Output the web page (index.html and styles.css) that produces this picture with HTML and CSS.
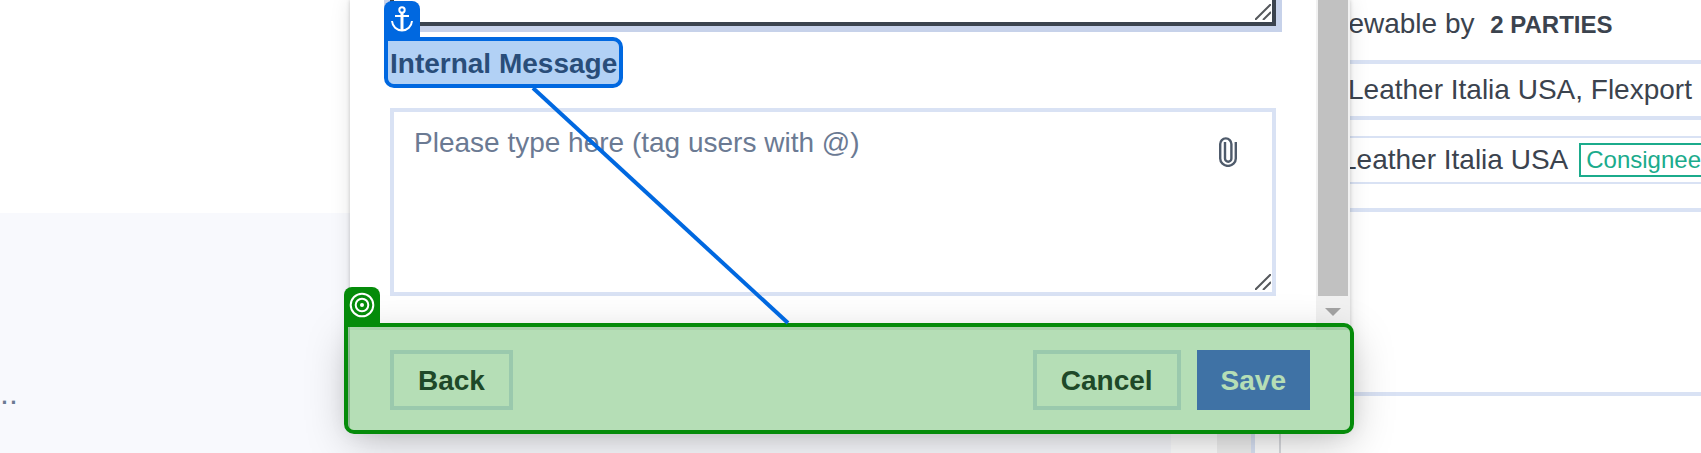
FILE: index.html
```html
<!DOCTYPE html>
<html lang="en">
<head>
<meta charset="utf-8">
<meta name="viewport" content="width=device-width, initial-scale=1">
<title>Internal Message</title>
<link rel="stylesheet" href="styles.css">
</head>
<body>
<main class="page">
  <section class="list-pane">
    <div class="list-top"></div>
    <div class="list-rest"><span class="list-text">..</span></div>
  </section>
  <div class="gutter"></div>
  <div class="page-scroll"></div>
  <div class="page-edge"></div>
  <aside class="details">
    <p class="viewable">Viewable by <strong class="party-count">2 PARTIES</strong></p>
    <div class="party-names">Leather Italia USA, Flexport</div>
    <div class="party-list">
      <div class="party-row">Leather Italia USA <span class="tag">Consignee</span></div>
    </div>
    <div class="details-body"></div>
  </aside>
</main>

<div class="overlay">
  <form class="modal" role="dialog" aria-label="Message">
    <div class="modal-main">
      <div class="fields">
        <div class="field field-focused">
          <textarea class="input input-focused" aria-label="Message"></textarea>
          <svg class="grip" viewBox="0 0 16 16" aria-hidden="true"><path d="M0 16L16 0M8 16L16 8"/></svg>
        </div>
        <div class="label-row">
          <label class="label" for="internal">Internal Message
            <span class="mark mark-blue"></span>
            <span class="badge badge-blue">
              <svg class="badge-icon" viewBox="0 0 26 26" aria-hidden="true"><circle cx="13" cy="4" r="2.700"/><path d="M6 10H20"/><path class="shank" d="M13 6.500V24.500"/><path d="M3 15C3.500 20.500 7.500 24.500 13 24.500S22.500 20.500 23 15"/></svg>
            </span>
          </label>
        </div>
        <div class="field">
          <textarea class="input input-internal" id="internal" placeholder="Please type here (tag users with @)"></textarea>
          <button class="attach" type="button" aria-label="Attach file">
            <svg class="attach-icon" viewBox="0 0 18 30" aria-hidden="true"><path d="M16.800 5V21.500a7.700 7.300 0 0 1-15.600 0V7a5.600 5.600 0 0 1 11.200 0V21.500a3.200 3.200 0 0 1-6.400 0V5"/></svg>
          </button>
          <svg class="grip" viewBox="0 0 16 16" aria-hidden="true"><path d="M0 16L16 0M8 16L16 8"/></svg>
        </div>
      </div>
      <div class="scrollbar" aria-hidden="true">
        <div class="thumb"></div>
        <svg class="arrow" viewBox="0 0 16 8"><path d="M0 0H16L8 8Z"/></svg>
      </div>
    </div>
    <footer class="footer">
      <button class="button" type="button">Back</button>
      <div class="actions">
        <button class="button" type="button">Cancel</button>
        <button class="button button-primary" type="submit">Save</button>
      </div>
      <span class="mark mark-green"></span>
      <span class="badge badge-green">
        <svg class="badge-icon" viewBox="0 0 26 26" aria-hidden="true"><circle cx="13" cy="13" r="11.300"/><circle cx="13" cy="13" r="6.300"/><circle class="dot" cx="13" cy="13" r="2"/></svg>
      </span>
    </footer>
    <svg class="connector" viewBox="0 0 255 235" aria-hidden="true"><path d="M0 0L255 235"/></svg>
  </form>
</div>
</body>
</html>
```

FILE: styles.css
```css
* {
  box-sizing: border-box;
}

body {
  margin: 0;
  overflow: hidden;
  background: #fff;
  color: #3b434e;
  font-family: "Liberation Sans", Arial, sans-serif;
  font-size: 28px;
  line-height: 40px;
}

/* Page behind the dialog */
.page {
  display: flex;
  min-height: 100vh;
}

.list-pane {
  flex: 0 0 1171px;
  display: flex;
  flex-direction: column;
}

.list-top {
  height: 213px;
}

.list-rest {
  flex: 1;
  padding-top: 160px;
  background: #f8f9fd;
}

.list-text {
  color: #6b7a93;
  font-size: 32px;
}

.gutter {
  flex: 0 0 46px;
}

.page-scroll {
  flex: 0 0 34px;
  background: #f0f0f0;
}

.page-edge {
  flex: 0 0 30px;
  border-left: 4px solid #d9e2f4;
  border-right: 2px solid #d8dade;
}

.details {
  flex: 1;
  min-width: 0;
  overflow: hidden;
  white-space: nowrap;
}

.viewable {
  margin: 0;
  padding: 4px 0 15px 43px;
}

.party-count {
  margin-left: 8px;
  font-size: 24px;
}

.party-names {
  padding: 6px 0 6px 67px;
  border-top: 4px solid #d9e2f4;
  border-bottom: 4px solid #d9e2f4;
}

.party-list {
  padding: 16px 0 24px;
  border-bottom: 4px solid #d9e2f4;
}

.party-row {
  display: flex;
  align-items: center;
  gap: 11px;
  height: 48px;
  padding-left: 60px;
  border-top: 2px solid #d9e2f4;
  border-bottom: 2px solid #d9e2f4;
}

.tag {
  flex: none;
  padding: 0 5px;
  border: 2px solid #1bab8c;
  color: #1bab8c;
  font-size: 24px;
  line-height: 30px;
}

.details-body {
  height: 184px;
  border-bottom: 4px solid #d9e2f4;
}

/* Dialog */
.overlay {
  position: absolute;
  inset: 0 1px 0 0;
  display: flex;
  justify-content: center;
  align-items: flex-start;
}

.modal {
  position: relative;
  width: 1000px;
  max-width: 100%;
  background: #fff;
  box-shadow: 0 0 4px rgba(0, 0, 0, 0.2), 0 0 20px rgba(0, 0, 0, 0.1);
}

.modal-main {
  display: flex;
}

.fields {
  flex: 1;
  padding: 0 40px 34px;
}

.field {
  position: relative;
  display: flex;
}

/* The form is scrolled, so the upper field shows only its end */
.field-focused {
  margin-top: -100px;
}

.input {
  width: 100%;
  height: 188px;
  padding: 11px 72px 10px 20px;
  border: 4px solid #d9e2f4;
  border-radius: 0;
  outline: none;
  resize: none;
  background: #fff;
  color: #3b434e;
  font: inherit;
}

.input::placeholder {
  color: #6b7a93;
  opacity: 1;
}

.input-focused {
  height: 126px;
  border-color: #3b434e;
  box-shadow: 0 0 0 6px #c7d2ea;
}

.grip {
  position: absolute;
  right: 5px;
  bottom: 6px;
  width: 16px;
  height: 16px;
  fill: none;
  stroke: #55585c;
  stroke-width: 2;
}

.attach {
  position: absolute;
  top: 29px;
  right: 39px;
  padding: 0;
  border: 0;
  background: none;
}

.attach-icon {
  display: block;
  width: 18px;
  height: 30px;
  fill: none;
  stroke: #4f5b6b;
  stroke-width: 2.4;
}

.label-row {
  display: flex;
  padding: 18px 0 24px;
}

.label {
  position: relative;
  font-weight: 700;
}

.scrollbar {
  flex: 0 0 34px;
  display: flex;
  flex-direction: column;
  align-items: center;
  background: #f1f1f1;
}

.thumb {
  flex: 1;
  width: 30px;
  background: #c1c1c1;
}

.arrow {
  width: 16px;
  height: 8px;
  margin: 12px 0 14px;
  fill: #a3a3a3;
}

.footer {
  position: relative;
  display: flex;
  justify-content: space-between;
  padding: 20px 40px;
  background: #fff;
  box-shadow: 0 10px 44px rgba(0, 0, 0, 0.25);
}

.actions {
  display: flex;
  gap: 16px;
}

.button {
  height: 60px;
  padding: 1px 24px 0;
  border: 4px solid #dae2f2;
  background: #fff;
  color: #2c2c38;
  font: inherit;
  font-weight: 700;
}

.button-primary {
  border: 0;
  background: #5a67e8;
  color: #fff;
}

/* Annotations */
.mark {
  position: absolute;
  border: 4px solid;
  border-radius: 0 10px 10px 10px;
}

.mark-blue {
  inset: -7px -6px -4px;
  border-color: #0068e0;
  background: rgba(0, 104, 222, 0.3);
  background-clip: padding-box;
}

.mark-green {
  inset: -7px -4px -4px -6px;
  border-color: #058b0a;
  background: rgba(0, 142, 5, 0.29);
  background-clip: padding-box;
}

.badge {
  position: absolute;
  top: -43px;
  left: -6px;
  display: flex;
  justify-content: center;
  align-items: center;
  width: 36px;
  height: 36px;
  border-radius: 8px 8px 0 0;
}

.badge-blue {
  background: #0068e0;
}

.badge-green {
  background: #058b0a;
}

.badge-icon {
  width: 26px;
  height: 26px;
  fill: none;
  stroke: #fff;
  stroke-width: 2;
}

.shank {
  stroke-width: 3;
}

.dot {
  fill: #fff;
  stroke: none;
}

.connector {
  position: absolute;
  top: 88px;
  left: 183px;
  width: 255px;
  height: 235px;
  overflow: visible;
  fill: none;
  stroke: #0068e0;
  stroke-width: 4;
  pointer-events: none;
}
```
